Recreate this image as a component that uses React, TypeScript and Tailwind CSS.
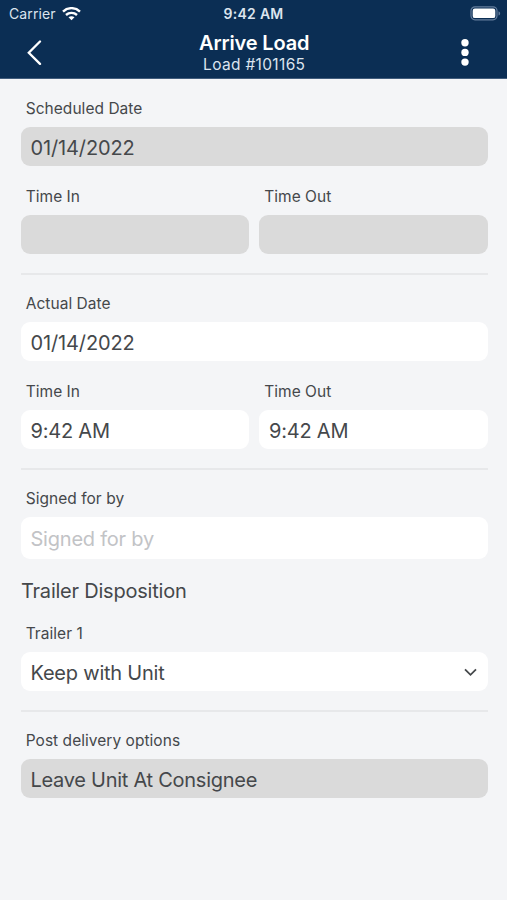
import type { ReactNode } from "react";

function Label({ children, className = "" }: { children: ReactNode; className?: string }) {
  return (
    <div className={`flex h-[39px] items-center pt-[2px] pl-[5.2px] text-[15.5px] tracking-[0.04px] whitespace-nowrap ${className}`}>
      {children}
    </div>
  );
}

function Field({ children, className = "h-[39px] bg-white" }: { children?: ReactNode; className?: string }) {
  return (
    <div
      className={`flex items-center rounded-[9px] pt-[2px] pr-[11px] pl-[10px] text-[20px] tracking-[-0.22px] whitespace-nowrap ${className}`}
    >
      {children}
    </div>
  );
}

function Divider() {
  return <div className="mt-[19px] mb-[8px] h-[2px] bg-[#e7e8ea]" />;
}

function StatusBar() {
  return (
    <div className="grid h-[27px] grid-cols-3 items-center text-[14px] text-[#dce4ee]">
      <div className="flex items-center gap-[6px] pl-[9px]">
        <span className="tracking-[0.1px]">Carrier</span>
        <svg width="19" height="14" viewBox="0 0 19 14" fill="none" stroke="#fff" strokeWidth="2.4">
          <path d="M1 4.6C5.8 0 13.2 0 18 4.6" />
          <path d="M4 8c3.1-2.9 7.9-2.9 11 0" />
          <path d="M6.5 10.3c1.7-1.5 4.3-1.5 6 0L9.5 13.3Z" fill="#fff" stroke="none" />
        </svg>
      </div>
      <span className="text-center font-semibold tracking-[0.3px]">9:42 AM</span>
      <div className="flex justify-end pr-[6px]">
        <svg width="31" height="15" viewBox="0 0 31 15">
          <rect x="1" y="0.8" width="26" height="13" rx="4" fill="none" stroke="#647d9c" strokeWidth="1.2" />
          <rect x="2.7" y="2.5" width="22.6" height="9.6" rx="2.2" fill="#fff" />
          <path d="M28.5 5.2c2.2.8 2.2 3.6 0 4.4Z" fill="#647d9c" />
        </svg>
      </div>
    </div>
  );
}

export default function App() {
  return (
    <div className="min-h-[900px] w-[507px] bg-[#f4f5f7] font-['Inter',sans-serif] text-[#45484b]">
      <header className="h-[79px] border-b border-[#415c7c] bg-[#0b2e54]">
        <StatusBar />
        <div className="grid h-[51px] grid-cols-[60px_1fr_60px] items-center">
          <svg
            className="ml-[27px]"
            width="15"
            height="26"
            viewBox="0 0 15 26"
            fill="none"
            stroke="#fff"
            strokeWidth="2.3"
            strokeLinecap="round"
          >
            <path d="M13 1.5 1.8 12.7 13 23.9" />
          </svg>
          <div className="pb-px pl-[1.4px] text-center whitespace-nowrap">
            <div className="text-[20px] leading-[24px] font-semibold tracking-[-0.15px] text-white">Arrive Load</div>
            <div className="text-[15.5px] leading-[19px] tracking-[0.33px] text-[#dce4ee]">Load #101165</div>
          </div>
          <svg className="ml-[13.3px]" width="10" height="28" viewBox="0 0 10 28" fill="#fff">
            <circle cx="5" cy="3.7" r="3.7" />
            <circle cx="5" cy="13.4" r="3.7" />
            <circle cx="5" cy="23.1" r="3.7" />
          </svg>
        </div>
      </header>
      <main className="pt-[9px] pr-[19.5px] pl-[20.5px]">
        <Label>Scheduled Date</Label>
        <Field className="h-[39px] bg-[#dadada]">
          <span className="tracking-[-0.14px]">01/14/2022</span>
        </Field>
        <div className="mt-[10px] grid grid-cols-2 gap-x-[10px]">
          <Label>Time In</Label>
          <Label>Time Out</Label>
          <Field className="h-[39px] bg-[#dadada]" />
          <Field className="h-[39px] bg-[#dadada]" />
        </div>
        <Divider />
        <Label>Actual Date</Label>
        <Field>
          <span className="tracking-[-0.14px]">01/14/2022</span>
        </Field>
        <div className="mt-[10px] grid grid-cols-2 gap-x-[10px]">
          <Label>Time In</Label>
          <Label>Time Out</Label>
          <Field>9:42 AM</Field>
          <Field>9:42 AM</Field>
        </div>
        <Divider />
        <Label>Signed for by</Label>
        <Field className="h-[42px] bg-white text-[#c2c3c6]">Signed for by</Field>
        <h2 className="mt-[18px] pl-[0.5px] text-[20px] leading-[28px] tracking-[-0.22px]">Trailer Disposition</h2>
        <Label className="mt-[8px]">Trailer 1</Label>
        <Field className="h-[39px] justify-between bg-white">
          <span>Keep with Unit</span>
          <svg width="13" height="9" viewBox="0 0 13 9" fill="none" stroke="#45484b" strokeWidth="1.8">
            <path d="m1 1.3 5.5 5.5L12 1.3" />
          </svg>
        </Field>
        <Divider />
        <Label>Post delivery options</Label>
        <Field className="h-[39px] bg-[#dadada]">
          <span className="tracking-[-0.27px]">Leave Unit At Consignee</span>
        </Field>
      </main>
    </div>
  );
}
